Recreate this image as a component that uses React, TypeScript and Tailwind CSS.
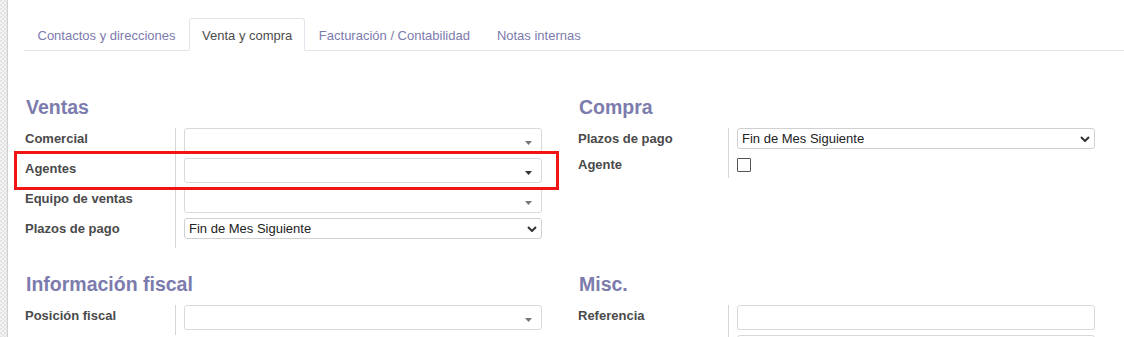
import React from 'react';

const tabs = ['Contactos y direcciones', 'Venta y compra', 'Facturación / Contabilidad', 'Notas internas'];

// Small filled caret used by the many2one fields
const Caret: React.FC<{ dark?: boolean }> = ({ dark }) => (
  <svg width="7" height="4" viewBox="0 0 7 4" className="mt-[5px]">
    <path d="M0 0 L7 0 L3.5 4 Z" fill={dark ? '#333333' : '#777777'} />
  </svg>
);

const Chevron: React.FC = () => (
  <svg width="10" height="6" viewBox="0 0 10 6">
    <path d="M1 1 L5 5 L9 1" fill="none" stroke="#333333" strokeWidth="2" />
  </svg>
);

const Many2One: React.FC<{ dark?: boolean }> = ({ dark }) => (
  <div className="w-[358px] h-[25px] border border-[#d9d9d9] rounded-[3px] bg-white flex items-center justify-end pr-[9px]">
    <Caret dark={dark} />
  </div>
);

const Select: React.FC<{ value: string }> = ({ value }) => (
  <div className="w-[358px] h-[21px] border border-[#d0d0d0] rounded-[3px] bg-white flex items-center justify-between pl-[4px] pr-[4px] text-[13px] text-[#222]">
    <span className="leading-[19px]">{value}</span>
    <Chevron />
  </div>
);

const TextInput: React.FC = () => (
  <div className="w-[358px] h-[25px] border border-[#d9d9d9] rounded-[3px] bg-white" />
);

const Row: React.FC<{ label?: string; h?: string; children: React.ReactNode }> = ({ label, h = 'h-[30px]', children }) => (
  <div className={`flex ${h}`}>
    <div className="w-[150px] shrink-0 pt-[2px] text-[13px] leading-[18px] font-bold text-[#4a4a4a]">{label}</div>
    <div className="border-l border-[#d6d6d6] pl-[8px]">{children}</div>
  </div>
);

const Heading: React.FC<{ children: React.ReactNode }> = ({ children }) => (
  <h2 className="h-[24px] mb-[9px] pl-px text-[19.5px] leading-[24px] font-bold text-[#7c7bad]">{children}</h2>
);

const App: React.FC = () => {
  return (
    <div className="relative flex w-[1124px] h-[337px] overflow-hidden bg-white font-['Liberation_Sans',Arial,sans-serif]">
      {/* left gutter strip */}
      <div className="w-[8px] shrink-0 border-r border-[#cfcfcf] bg-[repeating-conic-gradient(#f3f3f3_0%_25%,#e4e4e4_0%_50%)] bg-[length:4px_4px]" />

      <div className="flex-1 pl-[16px] pt-[18px]">
        {/* Tabs */}
        <div className="flex h-[33px] border-b border-[#e1e6ec]">
          {tabs.map((t, i) => (
            <div
              key={t}
              className={
                i === 1
                  ? 'h-[33px] px-[12px] pt-[7px] text-[13px] leading-[19px] text-[#4c4c4c] border border-[#e1e6ec] border-b-white rounded-t-[3px] bg-white'
                  : 'h-[33px] px-[12.5px] pt-[7px] text-[13px] leading-[19px] text-[#7c7bad] border border-transparent'
              }
            >
              {t}
            </div>
          ))}
        </div>

        {/* Form */}
        <div className="pl-px pt-[44px] grid grid-cols-[553px_553px]">
          <div>
            <Heading>Ventas</Heading>
            <Row label="Comercial"><Many2One /></Row>
            <Row label="Agentes"><Many2One dark /></Row>
            <Row label="Equipo de ventas"><Many2One /></Row>
            <Row label="Plazos de pago"><Select value="Fin de Mes Siguiente" /></Row>
          </div>
          <div>
            <Heading>Compra</Heading>
            <Row label="Plazos de pago" h="h-[26px]"><Select value="Fin de Mes Siguiente" /></Row>
            <Row label="Agente" h="h-[24px]">
              <div className="mt-[4px] w-[14px] h-[14px] border border-[#555] rounded-[1px] bg-white" />
            </Row>
          </div>

          <div className="mt-[24px]">
            <Heading>Información fiscal</Heading>
            <Row label="Posición fiscal"><Many2One /></Row>
          </div>
          <div className="mt-[24px]">
            <Heading>Misc.</Heading>
            <Row label="Referencia"><TextInput /></Row>
            <Row><TextInput /></Row>
          </div>
        </div>
      </div>

      {/* red highlight box around the Agentes row */}
      <div className="absolute left-[14px] top-[151px] w-[545px] h-[39px] border-[3px] border-[#f01414] pointer-events-none" />
    </div>
  );
};

export default App;
